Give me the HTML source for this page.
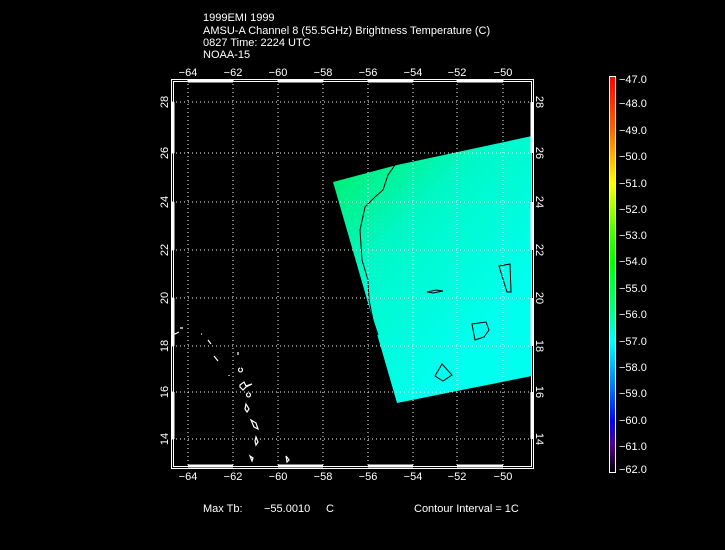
<!DOCTYPE html>
<html><head><style>
html,body{margin:0;padding:0;background:#000;width:725px;height:550px;overflow:hidden}
svg{display:block}
text{font-family:"Liberation Sans",sans-serif;font-size:11px;fill:#fff}
</style></head><body>
<svg width="725" height="550" viewBox="0 0 725 550">
<defs>
<linearGradient id="sw" x1="333" y1="182" x2="480" y2="330" gradientUnits="userSpaceOnUse">
<stop offset="0" stop-color="#00f078"/><stop offset="0.4" stop-color="#00f8c8"/><stop offset="1" stop-color="#00ffee"/>
</linearGradient>
<linearGradient id="cb" x1="0" y1="0" x2="0" y2="1">
<stop offset="0" stop-color="#ff0000"/><stop offset="0.13" stop-color="#ff6000"/><stop offset="0.2" stop-color="#ffb000"/>
<stop offset="0.27" stop-color="#ffff00"/><stop offset="0.4" stop-color="#40ff00"/><stop offset="0.47" stop-color="#00ff00"/>
<stop offset="0.6" stop-color="#00ff90"/><stop offset="0.67" stop-color="#00ffff"/><stop offset="0.8" stop-color="#0060ff"/>
<stop offset="0.87" stop-color="#0000ff"/><stop offset="0.93" stop-color="#500090"/><stop offset="1" stop-color="#000000"/>
</linearGradient>
</defs>
<text x="203" y="21">1999EMI 1999</text>
<text x="203" y="34">AMSU-A Channel 8 (55.5GHz) Brightness Temperature (C)</text>
<text x="203" y="46">0827 Time: 2224 UTC</text>
<text x="203" y="58">NOAA-15</text>
<polygon points="333,182 397,165 532,136 532,376 397,403" fill="url(#sw)"/>
<g fill="none" stroke="#000" stroke-width="1">
<polyline points="395,165 388,175 383,190 375,197 365,207 360,230 362,260 368,280 369,300 373,320 378,335"/>
<polygon points="499,266 510,264 511,292 507,292"/>
<polygon points="427,292 436,290 443,291 433,293"/>
<polygon points="472,324 486,322 489,330 484,337 475,340"/>
<polygon points="435,376 442,364 452,375 443,381"/>
</g>
<g stroke="#fff" stroke-width="1" stroke-dasharray="1,3">
<line x1="188" y1="80" x2="188" y2="467"/><line x1="233" y1="80" x2="233" y2="467"/>
<line x1="278" y1="80" x2="278" y2="467"/><line x1="323" y1="80" x2="323" y2="467"/>
<line x1="368" y1="80" x2="368" y2="467"/><line x1="413" y1="80" x2="413" y2="467"/>
<line x1="457" y1="80" x2="457" y2="467"/><line x1="503" y1="80" x2="503" y2="467"/>
<line x1="172" y1="102" x2="532" y2="102"/><line x1="172" y1="153" x2="532" y2="153"/>
<line x1="172" y1="202" x2="532" y2="202"/><line x1="172" y1="250" x2="532" y2="250"/>
<line x1="172" y1="298" x2="532" y2="298"/><line x1="172" y1="346" x2="532" y2="346"/>
<line x1="172" y1="392" x2="532" y2="392"/><line x1="172" y1="439" x2="532" y2="439"/>
</g>
<rect x="171.5" y="79.5" width="362" height="389" fill="none" stroke="#fff"/>
<rect x="173.5" y="81.5" width="358" height="385" fill="none" stroke="#fff"/>
<g stroke="#fff" stroke-width="3">
<line x1="188" y1="466" x2="233" y2="466"/><line x1="278" y1="466" x2="323" y2="466"/><line x1="368" y1="466" x2="413" y2="466"/><line x1="457" y1="466" x2="503" y2="466"/>
<line x1="188" y1="81" x2="233" y2="81"/><line x1="278" y1="81" x2="323" y2="81"/><line x1="368" y1="81" x2="413" y2="81"/><line x1="457" y1="81" x2="503" y2="81"/>
<line x1="173" y1="102" x2="173" y2="153"/><line x1="173" y1="202" x2="173" y2="250"/><line x1="173" y1="298" x2="173" y2="346"/><line x1="173" y1="392" x2="173" y2="439"/>
<line x1="532" y1="102" x2="532" y2="153"/><line x1="532" y1="202" x2="532" y2="250"/><line x1="532" y1="298" x2="532" y2="346"/><line x1="532" y1="392" x2="532" y2="439"/>
</g>
<g fill="none" stroke="#fff" stroke-width="1.2">
<path d="M173,335 l6,-3 M180,328 h3 M201,334 h1 M208,340 l3,4 M214,356 l4,5 M238,352 v3 M240,368 a2,2 0 1,0 1,0 M229,375 v1"/>
<path d="M240,385 l4,-3 l2,4 l6,-2 l-6,3 l-3,3 l-3,-3 z M248,393 a2,2 0 1,0 1,0 M246,404 l3,5 l-2,3 l-2,-3 z M251,420 l5,3 l2,6 l-4,-2 z M256,437 l2,5 l-2,3 l-1,-4 z M250,456 l3,2 l-1,3 z M286,456 l3,4 l-2,2 z"/>
</g>
<g text-anchor="middle">
<text x="188" y="76">−64</text><text x="233" y="76">−62</text><text x="278" y="76">−60</text><text x="323" y="76">−58</text>
<text x="368" y="76">−56</text><text x="413" y="76">−54</text><text x="457" y="76">−52</text><text x="503" y="76">−50</text>
<text x="188" y="480">−64</text><text x="233" y="480">−62</text><text x="278" y="480">−60</text><text x="323" y="480">−58</text>
<text x="368" y="480">−56</text><text x="413" y="480">−54</text><text x="457" y="480">−52</text><text x="503" y="480">−50</text>
</g>
<g text-anchor="middle">
<text transform="translate(168,102) rotate(-90)">28</text><text transform="translate(168,153) rotate(-90)">26</text>
<text transform="translate(168,202) rotate(-90)">24</text><text transform="translate(168,250) rotate(-90)">22</text>
<text transform="translate(168,298) rotate(-90)">20</text><text transform="translate(168,346) rotate(-90)">18</text>
<text transform="translate(168,392) rotate(-90)">16</text><text transform="translate(168,439) rotate(-90)">14</text>
<text transform="translate(536,102) rotate(90)">28</text><text transform="translate(536,153) rotate(90)">26</text>
<text transform="translate(536,202) rotate(90)">24</text><text transform="translate(536,250) rotate(90)">22</text>
<text transform="translate(536,298) rotate(90)">20</text><text transform="translate(536,346) rotate(90)">18</text>
<text transform="translate(536,392) rotate(90)">16</text><text transform="translate(536,439) rotate(90)">14</text>
</g>
<text x="203" y="512">Max Tb:</text><text x="264" y="512">−55.0010</text><text x="326" y="512">C</text>
<text x="414" y="512">Contour Interval = 1C</text>
<rect x="609.5" y="76.5" width="6" height="396" fill="url(#cb)" stroke="#fff"/>
<g font-size="11">
<text x="619" y="83">−47.0</text><text x="619" y="107">−48.0</text><text x="619" y="134">−49.0</text>
<text x="619" y="160">−50.0</text><text x="619" y="187">−51.0</text><text x="619" y="213">−52.0</text>
<text x="619" y="239">−53.0</text><text x="619" y="265">−54.0</text><text x="619" y="292">−55.0</text>
<text x="619" y="318">−56.0</text><text x="619" y="345">−57.0</text><text x="619" y="371">−58.0</text>
<text x="619" y="397">−59.0</text><text x="619" y="424">−60.0</text><text x="619" y="450">−61.0</text>
<text x="619" y="473">−62.0</text>
</g>
</svg>
</body></html>
